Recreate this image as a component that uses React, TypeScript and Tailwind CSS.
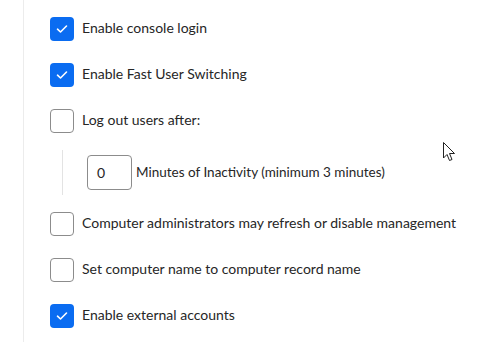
import React from "react";

type Option = { label: string; checked: boolean };

const top: Option[] = [
  { label: "Enable console login", checked: true },
  { label: "Enable Fast User Switching", checked: true },
  { label: "Log out users after:", checked: false },
];

const bottom: Option[] = [
  { label: "Computer administrators may refresh or disable management", checked: false },
  { label: "Set computer name to computer record name", checked: false },
  { label: "Enable external accounts", checked: true },
];

function Checkbox({ checked }: { checked: boolean }) {
  if (checked)
    return (
      <div className="w-6 h-6 rounded-[4px] bg-[#0a6cf1] flex items-center justify-center shrink-0">
        <svg width="12" height="10" viewBox="0 0 12 10" fill="none">
          <path d="M1.5 5.2 L4.5 8 L10.5 2" stroke="white" strokeWidth="1.6" strokeLinecap="round" strokeLinejoin="round" />
        </svg>
      </div>
    );
  return <div className="w-6 h-6 rounded-[4px] border border-[#8c8c8c] bg-white shrink-0" />;
}

function Row({ opt }: { opt: Option }) {
  return (
    <label className="flex items-center gap-2 h-6">
      <Checkbox checked={opt.checked} />
      <span className="text-[14px] leading-none text-[#262626] -mt-[2px]">{opt.label}</span>
    </label>
  );
}

function Cursor() {
  return (
    <svg className="absolute left-[443px] top-[142px]" width="13" height="21" viewBox="0 0 13 21">
      <path
        d="M0.5 0.5 L0.5 16 L4 12.5 L6.5 18.5 L9 17.5 L6.5 11.5 L11.5 11.5 Z"
        fill="white"
        stroke="#222"
        strokeWidth="1"
        strokeLinejoin="round"
      />
    </svg>
  );
}

export default function App() {
  return (
    <div className="relative w-[487px] h-[342px] bg-white overflow-hidden" style={{ fontFamily: "Lato, 'Open Sans', sans-serif" }}>
      <div className="h-full ml-[23px] border-l border-[#ececec] pl-[26px] pt-[17px]">
        <div className="flex flex-col gap-[22px]">
          {top.map((o) => (
            <Row key={o.label} opt={o} />
          ))}
        </div>

        {/* Inactivity timeout */}
        <div className="ml-3 my-[17px] border-l border-[#e3e3e3] pl-6 py-[5px] flex items-center gap-[4px]">
          <div className="w-[45px] h-[35px] rounded-[4px] border border-[#8c8c8c] flex items-center pl-[9px] text-[14px] text-[#262626]">
            0
          </div>
          <span className="text-[13.5px] text-[#262626]">Minutes of Inactivity (minimum 3 minutes)</span>
        </div>

        <div className="flex flex-col gap-[22px]">
          {bottom.map((o) => (
            <Row key={o.label} opt={o} />
          ))}
        </div>
      </div>
      <Cursor />
    </div>
  );
}
